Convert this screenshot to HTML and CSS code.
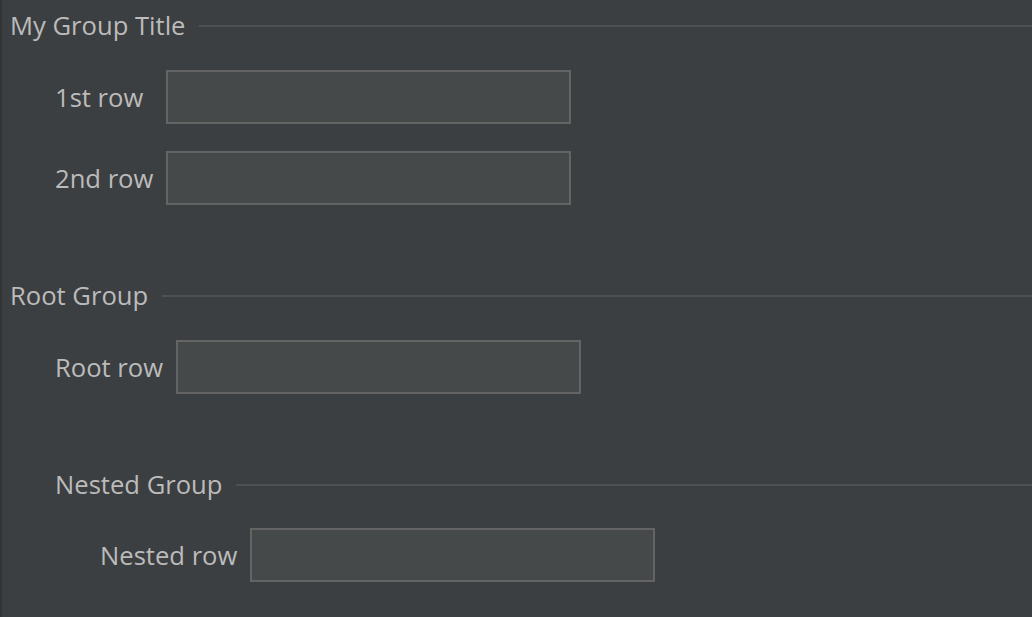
FILE: index.html
```html
<!DOCTYPE html>
<html>
<head>
<meta charset="utf-8">
<link rel="stylesheet" href="styles.css">
</head>
<body>
<div class="panel">
  <div class="group">
    <div class="group-title"><span class="title-text">My Group Title</span><span class="rule"></span></div>
    <div class="rows">
      <label class="lbl">1st row</label><div class="field"></div>
      <label class="lbl">2nd row</label><div class="field"></div>
    </div>
  </div>
  <div class="group group-gap">
    <div class="group-title"><span class="title-text">Root Group</span><span class="rule"></span></div>
    <div class="rows">
      <label class="lbl">Root row</label><div class="field"></div>
    </div>
    <div class="group nested group-gap">
      <div class="group-title"><span class="title-text">Nested Group</span><span class="rule"></span></div>
      <div class="rows">
        <label class="lbl">Nested row</label><div class="field"></div>
      </div>
    </div>
  </div>
</div>
</body>
</html>
```

FILE: styles.css
```css
html, body {
  margin: 0;
  padding: 0;
  height: 100%;
  background: #3c3f41;
}
body {
  font-family: "Open Sans", "Noto Sans", sans-serif;
  font-size: 25.6px;
  color: #bbbbbb;
  overflow: hidden;
}
.panel {
  box-sizing: border-box;
  height: 100%;
  border-left: 2px solid #323436;
  padding: 10px 0 0 8px;
}
.group-title {
  display: flex;
  align-items: center;
  gap: 14px;
  height: 32px;
}
.title-text {
  line-height: 32px;
  white-space: nowrap;
}
.rule {
  flex: 1;
  height: 2px;
  background: #4e5153;
  margin-top: -1px;
}
.rows {
  display: grid;
  grid-template-columns: max-content 405px;
  column-gap: 13px;
  row-gap: 27px;
  align-items: center;
  padding-left: 45px;
  margin-top: 28px;
}
.lbl {
  white-space: nowrap;
}
.field {
  box-sizing: border-box;
  height: 54px;
  background: #45494a;
  border: 2px solid #646464;
}
.group-gap {
  margin-top: 75px;
}
.nested {
  padding-left: 45px;
}
.nested .rows {
  margin-top: 27px;
}
```
